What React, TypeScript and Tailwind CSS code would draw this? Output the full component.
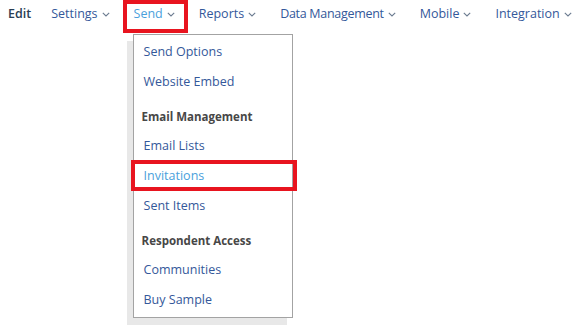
import React from "react";

const navItems = ["Settings", "Send", "Reports", "Data Management", "Mobile", "Integration"];

function Chevron() {
  return (
    <svg className="ml-[4px] h-[5px] w-[8px]" viewBox="0 0 8 5" fill="none" stroke="currentColor" strokeWidth={1.1}>
      <path d="M0.8 0.8 L4 4 L7.2 0.8" />
    </svg>
  );
}

type Row = { label: string; header?: boolean; active?: boolean };

const rows: Row[] = [
  { label: "Send Options" },
  { label: "Website Embed" },
  { label: "Email Management", header: true },
  { label: "Email Lists" },
  { label: "Invitations", active: true },
  { label: "Sent Items" },
  { label: "Respondent Access", header: true },
  { label: "Communities" },
  { label: "Buy Sample" },
];

// dropdown for the "Send" tab
function SendMenu() {
  return (
    <div className="absolute left-[11px] top-[34px] flex w-[160px] h-[284px] flex-col border border-[#a3a3a3] bg-white pt-[2px] shadow-[-6px_7px_0_#e8e8e8]">
      {rows.map((r) =>
        r.header ? (
          <div key={r.label} className="h-[34px] pt-[12px] pl-[8px] text-[11.5px] leading-[16px] font-bold whitespace-nowrap text-[#474747]">
            {r.label}
          </div>
        ) : (
          <div
            key={r.label}
            className={`relative flex h-[30px] items-center pl-[10px] text-[12.5px] whitespace-nowrap ${r.active ? "text-[#4a9fdc]" : "text-[#34589a]"}`}
          >
            {r.label}
            {r.active && (
              <span className="absolute -left-[3px] -right-[5px] -top-[1px] bottom-0 shadow-[inset_0_0_0_4px_#e8141f]" />
            )}
          </div>
        )
      )}
    </div>
  );
}

export default function App() {
  return (
    <div className="h-[333px] w-[577px] bg-white font-['Open_Sans',sans-serif]">
      <nav className="flex h-[33px] items-start pl-[8px]">
        <div className="flex h-[33px] items-start pt-[5px] pr-[8px] text-[12.5px] leading-[18px] font-semibold text-[#2a3d52]">Edit</div>
        {navItems.map((n) => (
          <div
            key={n}
            className={`relative flex h-[33px] items-center whitespace-nowrap px-[12px] pb-[5px] text-[12.5px] leading-[18px] ${
              n === "Send" ? "text-[#4a9fdc]" : "text-[#34589a]"
            } ${n === "Data Management" ? "tracking-[-0.3px]" : ""}`}
          >
            {n}
            <span className="text-[#6b7b90]">
              <Chevron />
            </span>
            {n === "Send" && (
              <>
                <span className="absolute left-[1px] -right-[1px] top-0 bottom-0 shadow-[inset_0_0_0_4px_#e8141f]" />
                <SendMenu />
              </>
            )}
          </div>
        ))}
      </nav>
    </div>
  );
}
